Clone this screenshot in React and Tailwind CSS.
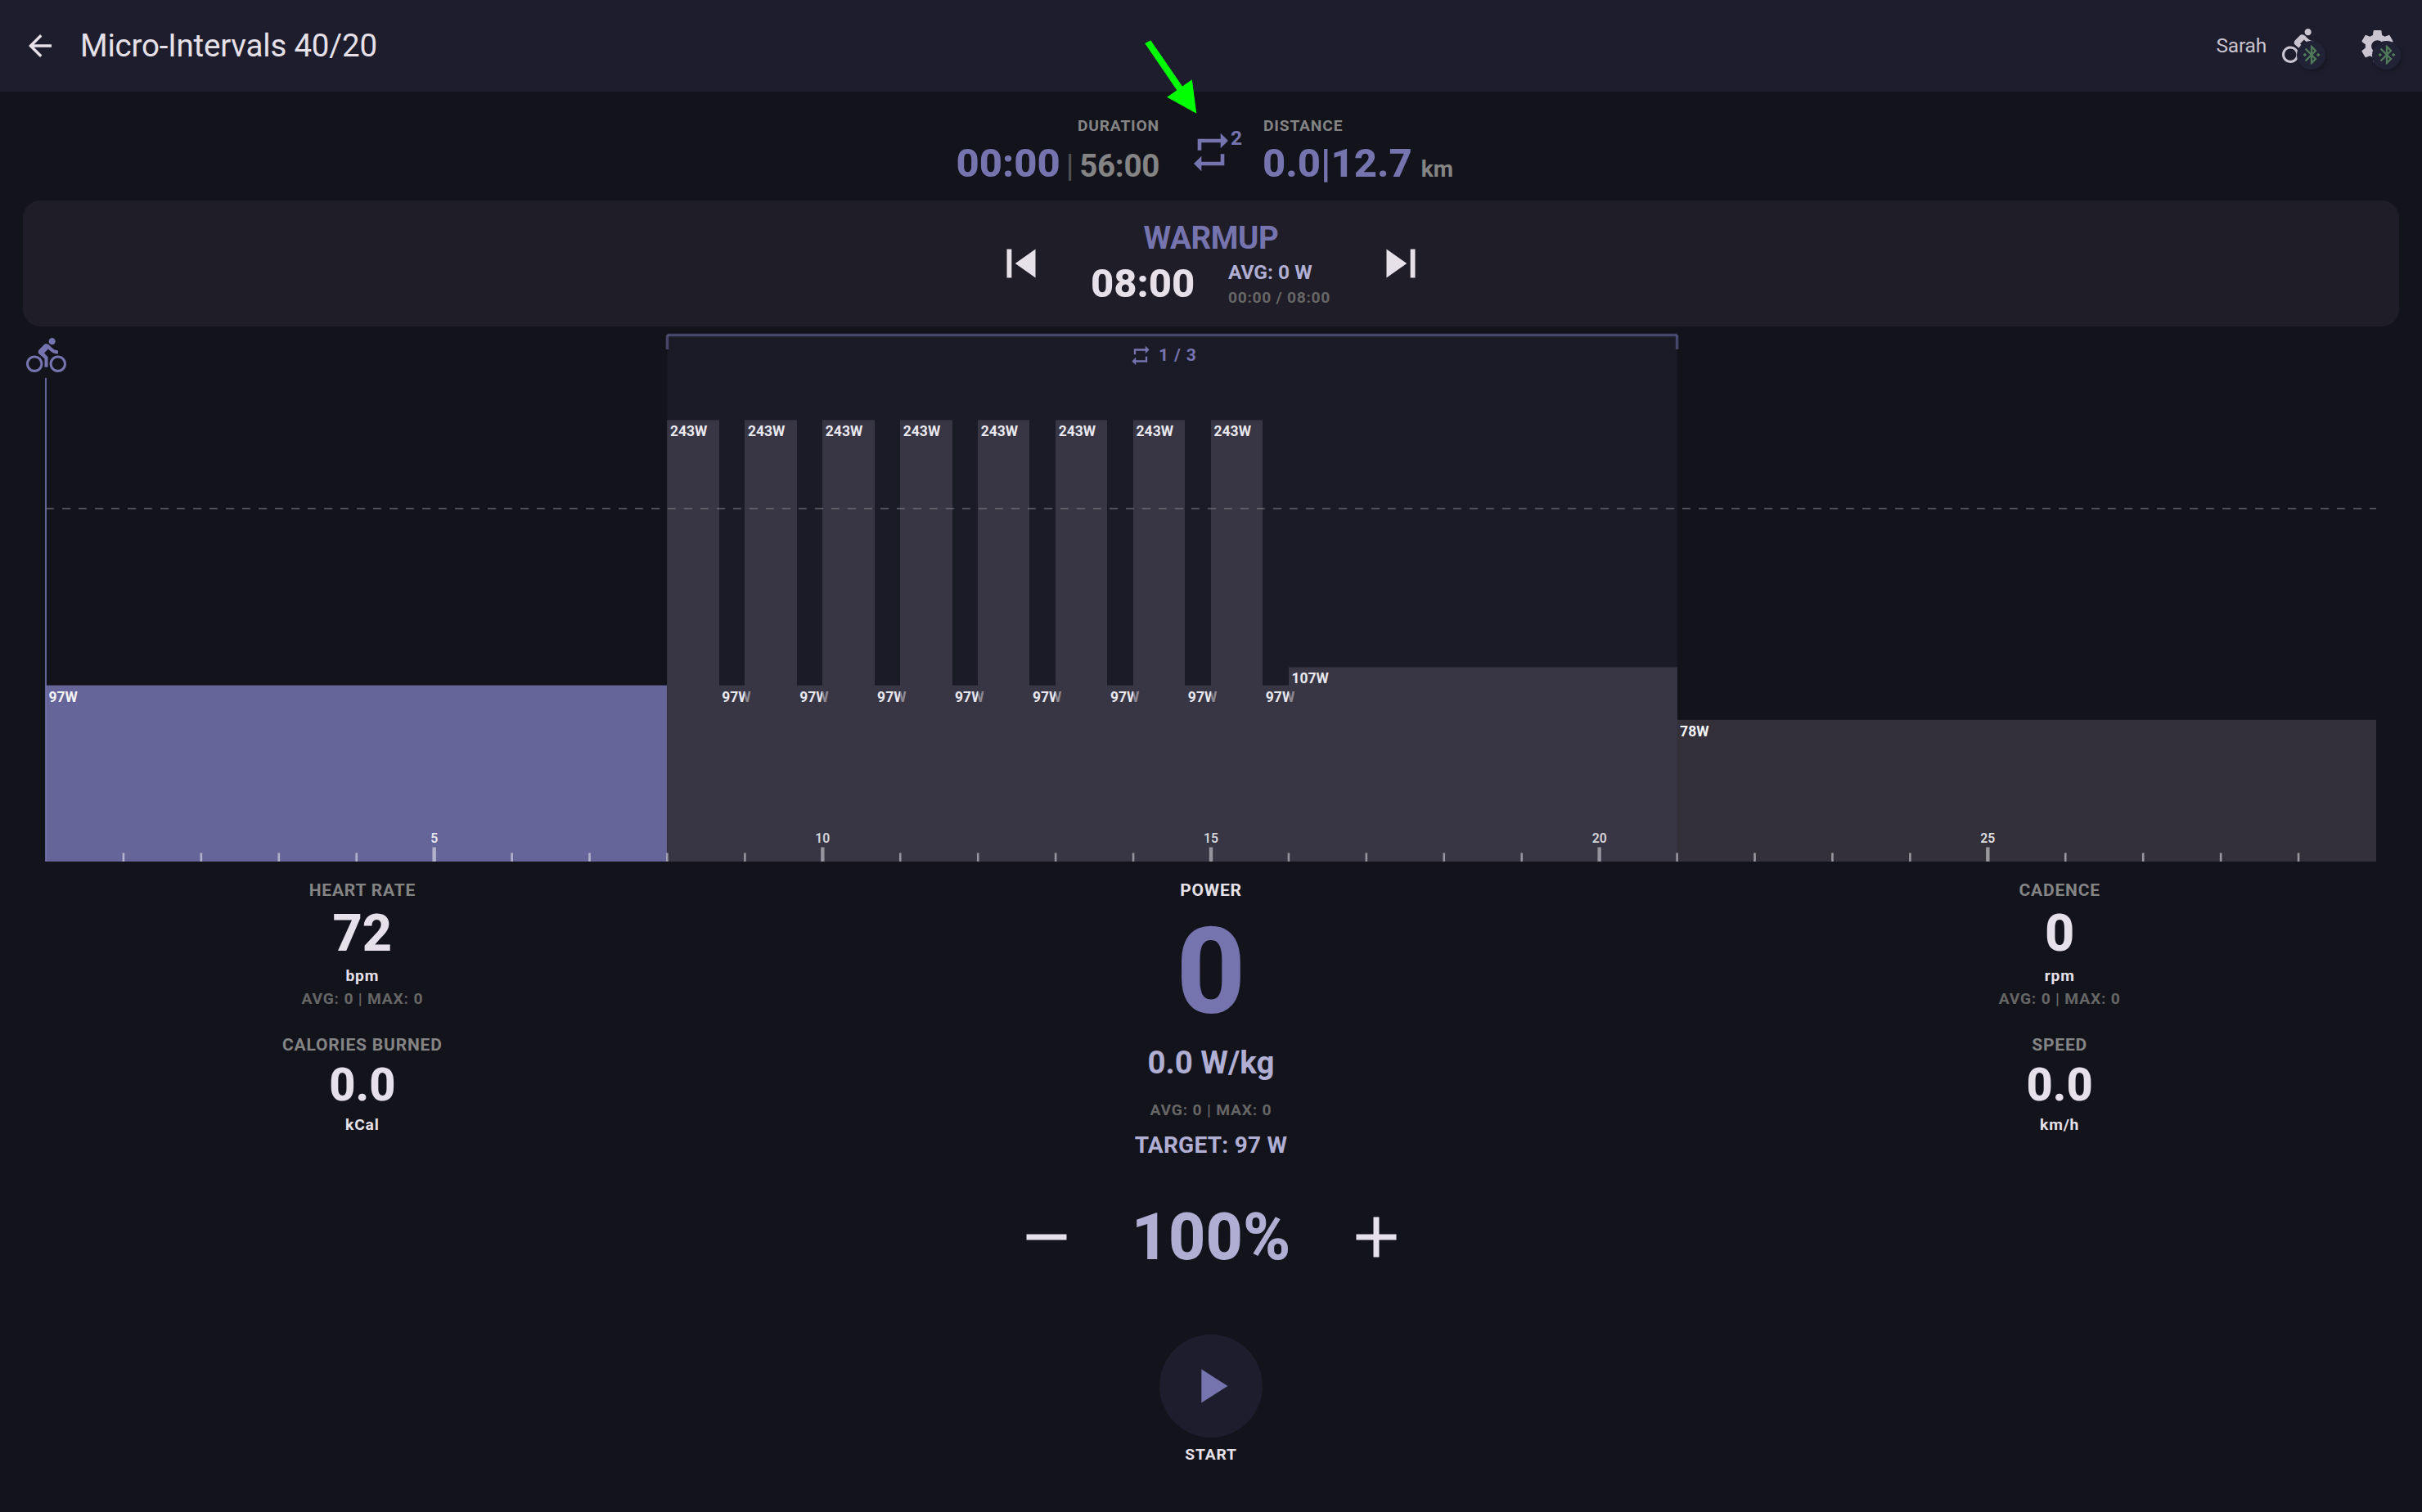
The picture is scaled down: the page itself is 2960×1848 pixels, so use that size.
const PX_PER_MIN = 2848 / 30;
const X0 = 56;
const BASE = 1053;
const PX_PER_WATT = 2.2205;

const PATHS = {
  back: 'M20 11H7.83l5.59-5.59L12 4l-8 8 8 8 1.41-1.41L7.83 13H20v-2z',
  bike: 'M15.5 5.5c1.1 0 2-.9 2-2s-.9-2-2-2-2 .9-2 2 .9 2 2 2zM5 12c-2.8 0-5 2.2-5 5s2.2 5 5 5 5-2.2 5-5-2.2-5-5-5zm0 8.5c-1.9 0-3.5-1.6-3.5-3.5s1.6-3.5 3.5-3.5 3.5 1.6 3.5 3.5-1.6 3.5-3.5 3.5zm5.8-10l2.4-2.4.8.8c1.3 1.3 3 2.1 5.1 2.1V9c-1.5 0-2.7-.6-3.6-1.5l-1.9-1.9c-.5-.4-1-.6-1.6-.6s-1.1.2-1.4.6L7.8 8.4c-.4.4-.6.9-.6 1.4 0 .6.2 1.1.6 1.4L11 14v5h2v-6.2l-2.2-2.3zM19 12c-2.8 0-5 2.2-5 5s2.2 5 5 5 5-2.2 5-5-2.2-5-5-5zm0 8.5c-1.9 0-3.5-1.6-3.5-3.5s1.6-3.5 3.5-3.5 3.5 1.6 3.5 3.5-1.6 3.5-3.5 3.5z',
  bluetooth:
    'M7 12l-2-2-2 2 2 2 2-2zm10.71-4.29L12 2h-1v7.59L6.41 5 5 6.41 10.59 12 5 17.59 6.41 19 11 14.41V22h1l5.71-5.71-4.3-4.29 4.3-4.29zM13 5.83l1.88 1.88L13 9.59V5.83zm1.88 10.46L13 18.17v-3.76l1.88 1.88zM19 10l-2 2 2 2 2-2-2-2z',
  settings:
    'M19.14 12.94c.04-.3.06-.61.06-.94 0-.32-.02-.64-.07-.94l2.03-1.58c.18-.14.23-.41.12-.61l-1.92-3.32c-.12-.22-.37-.29-.59-.22l-2.39.96c-.5-.38-1.03-.7-1.62-.94l-.36-2.54c-.04-.24-.24-.41-.48-.41h-3.84c-.24 0-.43.17-.47.41l-.36 2.54c-.59.24-1.13.57-1.62.94l-2.39-.96c-.22-.08-.47 0-.59.22L2.74 8.87c-.12.21-.08.47.12.61l2.03 1.58c-.05.3-.09.63-.09.94s.02.64.07.94l-2.03 1.58c-.18.14-.23.41-.12.61l1.92 3.32c.12.22.37.29.59.22l2.39-.96c.5.38 1.03.7 1.62.94l.36 2.54c.05.24.24.41.48.41h3.84c.24 0 .44-.17.47-.41l.36-2.54c.59-.24 1.13-.56 1.62-.94l2.39.96c.22.08.47 0 .59-.22l1.92-3.32c.12-.22.07-.47-.12-.61l-2.01-1.58zM12 15.6c-1.98 0-3.6-1.62-3.6-3.6s1.62-3.6 3.6-3.6 3.6 1.62 3.6 3.6-1.62 3.6-3.6 3.6z',
  repeat: 'M7 7h10v3l4-4-4-4v3H5v6h2V7zm10 10H7v-3l-4 4 4 4v-3h12v-6h-2v4z',
  prev: 'M6 6h2v12H6zm3.5 6l8.5 6V6z',
  next: 'M6 18l8.5-6L6 6v12zM16 6v12h2V6h-2z',
  minus: 'M19 13H5v-2h14v2z',
  plus: 'M19 13h-6v6h-2v-6H5v-2h6V5h2v6h6v2z',
  play: 'M8 5v14l11-7z',
};

function Icon({ name, className }) {
  return (
    <svg viewBox="0 0 24 24" fill="currentColor" className={className}>
      <path d={PATHS[name]} />
    </svg>
  );
}

const SEGMENTS = [{ start: 0, end: 8, watts: 97, active: true }];
for (let i = 0; i < 8; i++) {
  SEGMENTS.push({ start: 8 + i, end: 8 + i + 2 / 3, watts: 243 });
  SEGMENTS.push({ start: 8 + i + 2 / 3, end: 9 + i, watts: 97 });
}
SEGMENTS.push({ start: 16, end: 21, watts: 107 });
SEGMENTS.push({ start: 21, end: 30, watts: 78 });

const MINUTES = Array.from({ length: 29 }, (_, i) => i + 1);
const at = (min) => X0 + min * PX_PER_MIN;

function WorkoutChart() {
  return (
    <svg viewBox="0 399 2960 654" className="block h-[654px] w-[2960px]">
      {SEGMENTS.map((s, i) => {
        const top = BASE - s.watts * PX_PER_WATT;
        return (
          <g key={i}>
            <rect
              x={Math.round(at(s.start))}
              y={top}
              width={Math.round(at(s.end)) - Math.round(at(s.start))}
              height={BASE - top}
              fill={s.active ? '#7574af' : '#49454f'}
              fillOpacity={s.active ? 0.85 : 0.6}
            />
            <text x={at(s.start) + 3.5} y={top + 20} fontSize="17.5" fontWeight="700" fill="#f4f3f6">
              {s.watts}W
            </text>
          </g>
        );
      })}
      <line x1="56" x2="2904" y1="621.5" y2="621.5" stroke="#888888" strokeOpacity="0.5" strokeWidth="1.75" strokeDasharray="10 10" />
      {MINUTES.map((m) => {
        const major = m % 5 === 0;
        return (
          <g key={m}>
            <line x1={at(m)} x2={at(m)} y1={major ? 1035.5 : 1042.5} y2="1053" stroke="#ffffff" strokeOpacity="0.5" strokeWidth={major ? 4.4 : 2.6} />
            {major && (
              <text x={at(m)} y="1030.2" textAnchor="middle" fontSize="15.75" fontWeight="600" fill="#ffffff" fillOpacity="0.85">
                {m}
              </text>
            )}
          </g>
        );
      })}
      <rect x={at(8)} y="409" width={at(21) - at(8)} height="644" fill="#7574af" fillOpacity="0.085" />
      <g stroke="#7574af" strokeOpacity="0.5" strokeWidth="3.5">
        <line x1={at(8)} x2={at(21)} y1="409.5" y2="409.5" />
        <line x1={at(8)} x2={at(8)} y1="409.5" y2="427" />
        <line x1={at(21)} x2={at(21)} y1="409.5" y2="427" />
      </g>
      <g transform="translate(1380 420.5) scale(1.1667)" fill="#7574af">
        <path d={PATHS.repeat} />
      </g>
      <text x="1416" y="441" fontSize="21" fontWeight="700" letterSpacing="0.875" fill="#7574af">
        1 / 3
      </text>
      <line x1="56" x2="56" y1="462" y2="1053" stroke="#7574af" strokeOpacity="0.85" strokeWidth="2" />
      <g transform="translate(32 410) scale(2.0417)" fill="#7574af">
        <path d={PATHS.bike} />
      </g>
    </svg>
  );
}

function Badged({ icon, className }) {
  return (
    <div className={`relative size-[49px] text-[#cac4d0] ${className}`}>
      <Icon name={icon} className="size-[49px]" />
      <div className="absolute top-[18px] left-[18px] flex size-[35px] items-center justify-center rounded-full bg-[#222236] text-[#4f7a59] shadow-[2px_3px_5px_rgba(0,0,0,0.22)]">
        <Icon name="bluetooth" className="size-[28px]" />
      </div>
    </div>
  );
}

const SMALL = 'text-[19.25px] leading-[28px] font-bold tracking-[0.8px]';
const LABEL = 'text-[21px] leading-[28px] font-bold tracking-[0.8px]';

function SideMetrics({ top, bottom }) {
  return (
    <div className="flex w-[829.7px] flex-col items-center text-[#e6e1e9]">
      <div className={`mt-[21px] text-[#848484] ${LABEL}`}>{top.label}</div>
      <div className="mt-1 text-[63px] leading-[70px] font-extrabold">{top.value}</div>
      <div className={`mt-[3px] ${SMALL}`}>{top.unit}</div>
      <div className={`text-[#666666] ${SMALL}`}>AVG: 0 | MAX: 0</div>
      <div className={`mt-7 text-[#848484] ${LABEL}`}>{bottom.label}</div>
      <div className="mt-[3px] text-[56px] leading-[64px] font-extrabold">{bottom.value}</div>
      <div className={`mt-[3px] ${SMALL}`}>{bottom.unit}</div>
    </div>
  );
}

export default function App() {
  return (
    <div className="relative h-[1848px] w-[2960px] overflow-hidden bg-[#13131c] font-['Roboto',sans-serif]">
      <header className="flex h-[112px] items-center bg-[#1e1d2d] text-[#e6e1e9]">
        <Icon name="back" className="ml-[28px] size-[42px]" />
        <h1 className="ml-[28px] text-[38.5px] leading-[50px] tracking-[-0.2px]">Micro-Intervals 40/20</h1>
        <div className="ml-auto text-[24.5px] leading-[32px] tracking-[-0.2px] text-[#cac4d0]">Sarah</div>
        <Badged icon="bike" className="ml-[19px]" />
        <Badged icon="settings" className="mr-[30px] ml-[43px]" />
      </header>

      <section className="flex h-[133px] font-extrabold">
        <div className="flex w-[1417px] flex-col items-end pt-[29px]">
          <div className="text-[19.25px] leading-[26px] font-bold tracking-[0.8px] text-[#848484]">DURATION</div>
          <div className="mt-[5px] flex items-baseline leading-[56px]">
            <span className="text-[49px] text-[#7574af]">00:00</span>
            <span className="ml-[7px] text-[38.5px] font-medium text-[#505056]">|</span>
            <span className="ml-[7px] text-[38.5px] font-bold tracking-[-0.3px] text-[#848484]">56:00</span>
          </div>
        </div>
        <Icon name="repeat" className="mt-[46px] ml-[35px] size-[56px] text-[#7574af]" />
        <div className="mt-[41px] -ml-[4px] w-[40px] text-[24.5px] leading-[32px] font-bold text-[#7574af]">2</div>
        <div className="flex flex-col pt-[29px]">
          <div className="text-[19.25px] leading-[26px] font-bold tracking-[0.8px] text-[#848484]">DISTANCE</div>
          <div className="mt-[5px] -ml-px flex items-baseline leading-[56px]">
            <span className="text-[49px] text-[#7574af]">0.0|12.7</span>
            <span className="ml-[11px] text-[28px] font-bold text-[#848484]">km</span>
          </div>
        </div>
      </section>

      <section className="mx-7 flex h-[154px] items-center justify-center rounded-[21px] bg-[#1f1d27] text-[#e6e1e9]">
        <Icon name="prev" className="size-[70px]" />
        <div className="flex h-full w-[394px] flex-col pt-[23px]">
          <div className="text-center text-[38.5px] leading-[46px] font-bold tracking-[-0.4px] text-[#7574af]">WARMUP</div>
          <div className="flex pl-[50px]">
            <div className="mt-[5px] w-[168px] text-[49px] leading-[56px] font-extrabold">08:00</div>
            <div className="mt-[3px]">
              <div className="text-[24.5px] leading-[32px] font-bold text-[#b0aed3]">AVG: 0 W</div>
              <div className="mt-[3px] text-[19.25px] leading-[24px] font-bold tracking-[0.7px] text-[#666666]">00:00 / 08:00</div>
            </div>
          </div>
        </div>
        <Icon name="next" className="size-[70px]" />
      </section>

      <WorkoutChart />

      <main className="flex justify-center">
        <SideMetrics
          top={{ label: 'HEART RATE', value: '72', unit: 'bpm' }}
          bottom={{ label: 'CALORIES BURNED', value: '0.0', unit: 'kCal' }}
        />
        <div className="flex w-[1244.6px] flex-col items-center text-[#b0aed3]">
          <div className={`mt-[21px] text-[#e6e1e9] ${LABEL}`}>POWER</div>
          <div className="mt-px text-[147px] leading-[170px] font-extrabold text-[#7574af]">0</div>
          <div className="mt-[3px] text-[38.5px] leading-[46px] font-bold">0.0 W/kg</div>
          <div className={`mt-[21px] text-[#666666] ${SMALL}`}>AVG: 0 | MAX: 0</div>
          <div className="mt-[11px] text-[28px] leading-[36px] font-bold tracking-[0.2625px]">TARGET: 97 W</div>
          <div className="mt-[52px] flex h-[84px] items-center justify-center">
            <Icon name="minus" className="size-[84px] text-[#e6e1e9]" />
            <div className="w-[319px] text-center text-[78.75px] leading-[84px] font-extrabold">100%</div>
            <Icon name="plus" className="size-[84px] text-[#e6e1e9]" />
          </div>
          <button className="mt-[77px] flex size-[126px] items-center justify-center rounded-full bg-[#1e1d2d] text-[#7574af]">
            <Icon name="play" className="size-[70px]" />
          </button>
          <div className={`mt-[7px] text-[#e6e1e9] ${SMALL}`}>START</div>
        </div>
        <SideMetrics
          top={{ label: 'CADENCE', value: '0', unit: 'rpm' }}
          bottom={{ label: 'SPEED', value: '0.0', unit: 'km/h' }}
        />
      </main>

      <svg viewBox="0 0 80 100" className="absolute top-[45px] left-[1390px] h-[100px] w-[80px]" fill="#00ff00">
        <path d="M9.2 8L16.3 4.3L55 60.5L66.8 52.3L72.3 93.7L36.1 73.7L48.3 65.2Z" />
      </svg>
    </div>
  );
}
